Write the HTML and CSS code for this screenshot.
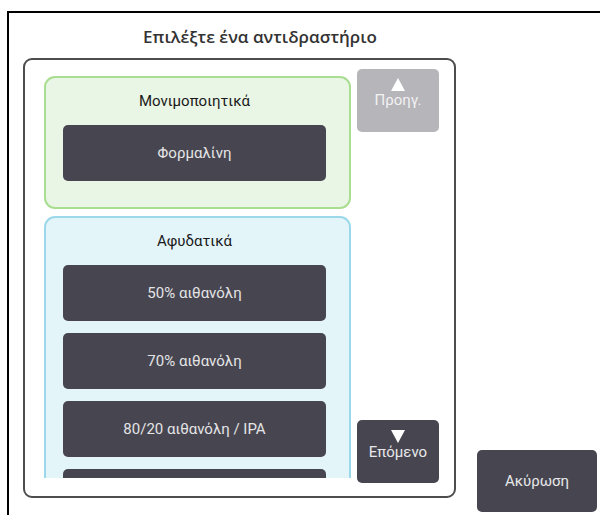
FILE: index.html
```html
<!DOCTYPE html>
<html lang="el">
<head>
  <meta charset="UTF-8">
  <title>Επιλέξτε ένα αντιδραστήριο</title>
  <link rel="stylesheet" href="styles.css">
</head>
<body>

  <div class="frame">
    <h2 class="title">Επιλέξτε ένα αντιδραστήριο</h2>

    <div class="row">
      <div class="panel">
        <div class="list">
          <div class="group fixatives">
            <div class="group-label">Μονιμοποιητικά</div>
            <button class="reagent">Φορμαλίνη</button>
          </div>
          <div class="group dehydrants">
            <div class="group-label">Αφυδατικά</div>
            <button class="reagent">50% αιθανόλη</button>
            <button class="reagent">70% αιθανόλη</button>
            <button class="reagent">80/20 αιθανόλη / IPA</button>
            <button class="reagent"></button>
          </div>
        </div>

        <div class="nav">
          <button class="nav-btn disabled">
            <svg width="14" height="13" viewBox="0 0 14 13"><polygon points="7,0 14,13 0,13" fill="#fff"/></svg>
            <span>Προηγ.</span>
          </button>
          <button class="nav-btn">
            <svg width="14" height="13" viewBox="0 0 14 13"><polygon points="0,0 14,0 7,13" fill="#fff"/></svg>
            <span>Επόμενο</span>
          </button>
        </div>
      </div>

      <button class="cancel">Ακύρωση</button>
    </div>
  </div>

</body>
</html>
```

FILE: styles.css
```css
body {
  margin: 0;
  background: #fff;
  font-family: Roboto, "Liberation Sans", sans-serif;
  overflow: hidden;
}
.frame {
  margin: 11px 0 0 7px;
  border-top: 2px solid #000;
  border-left: 2px solid #000;
  height: 502px;
}
.title {
  margin: 0;
  width: 502px;
  padding-top: 3px;
  height: 42px;
  line-height: 42px;
  text-align: center;
  font-family: "Open Sans", sans-serif;
  font-weight: 600;
  font-size: 17px;
  color: #333;
}
.row {
  display: flex;
  align-items: flex-end;
}
.panel {
  box-sizing: border-box;
  width: 433px;
  height: 440px;
  margin: 0 0 14px 14px;
  border: 2px solid #4d4d4d;
  border-radius: 9px;
  display: flex;
  align-items: flex-start;
  padding-left: 19px;
}
.list {
  width: 307px;
  height: 402px;
  margin-top: 16px;
  overflow: hidden;
  display: flex;
  flex-direction: column;
  gap: 7px;
}
.group {
  flex-shrink: 0;
  border: 2px solid;
  border-radius: 11px;
  padding: 0 23px 26px 17px;
  display: flex;
  flex-direction: column;
  gap: 12px;
}
.fixatives {
  background: #e9f5e5;
  border-color: #a9de90;
}
.dehydrants {
  background: #e4f5fa;
  border-color: #9bd9ea;
}
.group-label {
  height: 35px;
  line-height: 47px;
  text-align: center;
  font-size: 15px;
  color: #1a1a1a;
}
.reagent {
  height: 56px;
  border: none;
  border-radius: 5px;
  background: #474650;
  color: #e4e4e6;
  font-family: Roboto, "Liberation Sans", sans-serif;
  font-size: 15px;
  flex-shrink: 0;
}
.nav {
  width: 82px;
  height: 414px;
  margin: 9px 0 0 6px;
  display: flex;
  flex-direction: column;
  justify-content: space-between;
}
.nav-btn {
  height: 63px;
  border: none;
  border-radius: 5px;
  background: #474650;
  color: #e8e8ea;
  font-family: Roboto, "Liberation Sans", sans-serif;
  font-size: 15px;
  display: flex;
  flex-direction: column;
  align-items: center;
  justify-content: flex-start;
  padding: 10px 0 0;
  line-height: 18px;
}
.nav-btn.disabled {
  background: #b6b5ba;
  color: #f2f2f3;
  padding-top: 9px;
}
.cancel {
  width: 120px;
  height: 62px;
  margin-left: 21px;
  border: none;
  border-radius: 5px;
  background: #474650;
  color: #e8e8ea;
  font-family: Roboto, "Liberation Sans", sans-serif;
  font-size: 15px;
}
```
